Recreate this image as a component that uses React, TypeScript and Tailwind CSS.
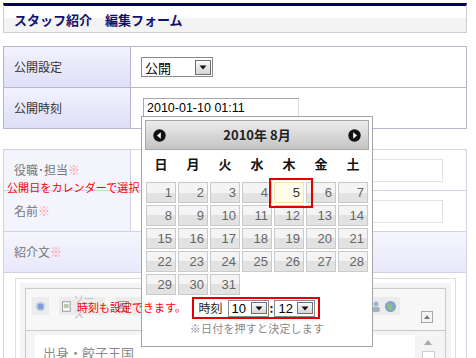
import React from "react";

const weekDays = ["日", "月", "火", "水", "木", "金", "土"];
const days = Array.from({ length: 31 }, (_, i) => i + 1);

function DropButton({ className = "" }: { className?: string }) {
  return (
    <span
      className={`flex items-center justify-center border border-[#6f6f6f] bg-linear-to-b from-[#fafafa] to-[#d6d6d6] ${className}`}
    >
      <svg width="8" height="5" viewBox="0 0 8 5">
        <polygon points="0.5,0.5 7.5,0.5 4,4.5" fill="#111" />
      </svg>
    </span>
  );
}

function Select({ value, className = "" }: { value: string; className?: string }) {
  return (
    <div className={`flex items-center justify-between border border-[#8a8a8a] bg-white pl-[3px] pr-[1px] ${className}`}>
      <span className="leading-none">{value}</span>
      <DropButton className="h-[calc(100%-3px)] w-[16px]" />
    </div>
  );
}

function Header() {
  return (
    <div className="flex h-[30px] w-[464px] items-center border border-t-[3px] border-[#cfcfcf] border-t-[#000066] bg-[linear-gradient(to_bottom,#ffffff_48%,#f3f3f3_48%)] pl-[10px]">
      <h1 className="text-[13px] font-bold leading-none text-[#12126e]">スタッフ紹介　編集フォーム</h1>
    </div>
  );
}

function PublishTable() {
  return (
    <div className="mt-[13px] w-[464px] border border-[#b6b6d2] text-[12px] text-[#333]">
      <div className="flex h-[41px] border-b border-[#b6b6d2]">
        <div className="flex w-[127px] items-center border-r border-[#b6b6d2] bg-linear-to-b from-[#f2f2fe] to-[#dedef7] pl-[10px]">
          公開設定
        </div>
        <div className="flex flex-1 items-center pl-[10px]">
          <Select value="公開" className="h-[20px] w-[72px] text-[13px] text-black" />
        </div>
      </div>
      <div className="flex h-[40px]">
        <div className="flex w-[127px] items-center border-r border-[#b6b6d2] bg-linear-to-b from-[#f2f2fe] to-[#dedef7] pl-[10px]">
          公開時刻
        </div>
        <div className="flex flex-1 items-center pl-[12px]">
          <div className="flex h-[21px] w-[156px] items-center border border-[#a8a8a8] border-r-[#dcdcdc] border-b-[#dcdcdc] pl-[3px] font-['Liberation_Sans',sans-serif] text-[12.5px] text-black">
            2010-01-10 01:11
          </div>
        </div>
      </div>
    </div>
  );
}

function LabelCell({ children }: { children: React.ReactNode }) {
  return (
    <div className="flex w-[127px] items-center border-r border-[#d2d2e2] bg-[#f4f4fd] pl-[10px]">
      {children}
      <span className="text-[#ff9a9a]">※</span>
    </div>
  );
}

function ToolIcon({ children, className = "" }: { children: React.ReactNode; className?: string }) {
  return <div className={`flex h-[18px] items-center gap-[3px] bg-[#ececec] px-[3px] ${className}`}>{children}</div>;
}

function ProfileTable() {
  return (
    <div className="mt-[20px] w-[464px] border border-[#d2d2e2] text-[12px] text-[#777]">
      <div className="flex h-[41px] border-b border-[#d2d2e2]">
        <LabelCell>役職･担当</LabelCell>
        <div className="flex flex-1 items-center pl-[11px]">
          <div className="h-[23px] w-[301px] border border-[#e2e2e2]" />
        </div>
      </div>
      <div className="flex h-[41px] border-b border-[#d2d2e2]">
        <LabelCell>名前</LabelCell>
        <div className="flex flex-1 items-center pl-[11px]">
          <div className="h-[23px] w-[301px] border border-[#e2e2e2]" />
        </div>
      </div>
      <div className="flex h-[41px] items-center border-b border-[#d2d2e2] bg-linear-to-b from-[#f6f6fe] to-[#e8e8fa] pl-[10px]">
        紹介文<span className="text-[#ff9a9a]">※</span>
      </div>
      <div className="pb-[20px] pl-[11px] pr-[10px] pt-[5px]">
        <div className="border border-[#dedede] bg-white p-[4px]">
          <div className="bg-[#f4f4f4] p-[5px]">
            <div className="border border-[#c9c9d3] bg-[#f4f4f4]">
              <div className="relative flex h-[42px] gap-[10px] border-b border-[#c9c9d3] bg-[#f7f7f7] pl-[6px] pt-[8px]">
                <ToolIcon>
                  <svg width="11" height="11" viewBox="0 0 11 11">
                    <circle cx="5.5" cy="5.5" r="4.5" fill="#b7c6dc" />
                    <rect x="3" y="3" width="5" height="5" fill="#7f9fd4" />
                  </svg>
                </ToolIcon>
                <ToolIcon className="w-[46px]">
                  <svg width="9" height="11" viewBox="0 0 9 11">
                    <rect x="0.5" y="0.5" width="8" height="10" fill="#f8f8f8" stroke="#9a9a9a" />
                    <rect x="2" y="3" width="5" height="4" fill="#b9c9a9" />
                  </svg>
                  <span className="text-[10px] text-[#bbb]">ソース</span>
                </ToolIcon>
                <ToolIcon className="w-[28px]">
                  <svg width="11" height="11" viewBox="0 0 11 11">
                    <rect x="0.5" y="0.5" width="10" height="10" fill="#eee" stroke="#999" />
                    <rect x="2" y="2" width="7" height="6" fill="#a9bdd3" />
                  </svg>
                </ToolIcon>
                <div className="ml-auto mr-[45px] flex gap-[2px]">
                  <ToolIcon className="w-[32px]">
                    <svg width="10" height="11" viewBox="0 0 10 11">
                      <circle cx="5" cy="3" r="2.5" fill="#9fb3c9" />
                      <rect x="1" y="6" width="8" height="5" rx="2" fill="#9fb3c9" />
                    </svg>
                    <svg width="13" height="13" viewBox="0 0 13 13">
                      <circle cx="6.5" cy="6.5" r="5.5" fill="#7fa3c9" />
                      <path d="M3 5 Q6 2 9 5 Q7 8 10 9 Q6 11 4 9 Z" fill="#8dbf8d" />
                    </svg>
                  </ToolIcon>
                </div>
                <div className="absolute right-[12px] top-[22px] flex h-[12px] w-[12px] items-center justify-center border border-[#a8a8a8] bg-[#f4f4f4]">
                  <svg width="6" height="4" viewBox="0 0 6 4">
                    <polygon points="0,4 6,4 3,0" fill="#777" />
                  </svg>
                </div>
              </div>
              <div className="flex p-[4px] pl-[9px]">
                <div className="h-[40px] flex-1 bg-white pl-[8px] pt-[8px] text-[13px] text-[#8a8a8a]">出身・餃子王国</div>
                <div className="flex w-[26px] flex-col items-center pt-[5px]">
                  <svg width="8" height="5" viewBox="0 0 8 5">
                    <polygon points="0,5 8,5 4,0" fill="#aaa" />
                  </svg>
                  <div className="mt-[6px] h-[14px] w-[13px] border border-[#cfcfcf] bg-white" />
                </div>
              </div>
            </div>
          </div>
        </div>
      </div>
    </div>
  );
}

function NavIcon({ dir }: { dir: "prev" | "next" }) {
  return (
    <svg width="13" height="13" viewBox="0 0 13 13">
      <circle cx="6.5" cy="6.5" r="6.2" fill="#111" />
      {dir === "prev" ? (
        <polygon points="7.8,3.2 4,6.5 7.8,9.8" fill="#fff" />
      ) : (
        <polygon points="5.2,3.2 9,6.5 5.2,9.8" fill="#fff" />
      )}
    </svg>
  );
}

function Calendar() {
  return (
    <div className="absolute left-[141px] top-[116px] z-10 h-[231px] w-[232px] border border-[#a4a4a4] bg-white p-[3px]">
      <div className="flex h-[30px] items-center justify-between border border-[#a8a8a8] bg-linear-to-b from-[#ececec] to-[#c4c4c4] px-[7px]">
        <NavIcon dir="prev" />
        <span className="text-[13px] font-bold text-[#222]">2010年 8月</span>
        <NavIcon dir="next" />
      </div>
      <div className="mb-[4px] grid h-[28px] grid-cols-7 gap-x-[2px] px-[1px]">
        {weekDays.map((d) => (
          <div key={d} className="flex items-center justify-center text-[13px] font-bold text-[#111]">
            {d}
          </div>
        ))}
      </div>
      <div className="grid grid-cols-[repeat(7,30px)] gap-x-[2px] gap-y-[2px] px-[1px]">
        {days.map((d) => (
          <div
            key={d}
            className={`flex h-[21px] items-center justify-end border pr-[3px] font-['Liberation_Sans',sans-serif] text-[13px] ${
              d === 5
                ? "border-[#f1e4a4] bg-[#fffcea] text-[#333]"
                : "border-[#cacaca] bg-[linear-gradient(to_bottom,#f4f4f4_50%,#e2e2e2_50%)] text-[#666]"
            }`}
          >
            {d}
          </div>
        ))}
      </div>
      <div className="mt-[2px] flex justify-center pr-[2px]">
        <div className="flex h-[22px] items-center border-2 border-[#e00000] pl-[5px] pr-[3px] text-[12px] text-[#222]">
          <span>時刻</span>
          <Select value="10" className="ml-[5px] h-[17px] w-[41px] font-['Liberation_Sans',sans-serif] text-[13px] text-black" />
          <span className="px-[1px] font-bold">:</span>
          <Select value="12" className="h-[17px] w-[41px] font-['Liberation_Sans',sans-serif] text-[13px] text-black" />
        </div>
      </div>
      <div className="mt-[1px] text-center text-[11px] tracking-[0.2px] text-[#8a8a8a]">※日付を押すと決定します</div>
    </div>
  );
}

export default function App() {
  return (
    <div className="relative h-[358px] w-[476px] overflow-hidden bg-white px-[3px] pt-[3px] font-['Noto_Sans_CJK_JP',sans-serif]">
      <Header />
      <PublishTable />
      <ProfileTable />

      <div className="absolute left-[7px] top-[182px] z-[5] text-[11px] leading-none tracking-[0.1px] text-[#ff0000]">
        公開日をカレンダーで選択
      </div>
      <Calendar />
      <div className="absolute left-[269px] top-[178px] z-20 h-[30px] w-[44px] border-2 border-[#e00000]" />
      <div className="absolute left-[77px] top-[302px] z-20 text-[11px] leading-none text-[#ff0000]">
        時刻も設定できます。
      </div>
    </div>
  );
}
